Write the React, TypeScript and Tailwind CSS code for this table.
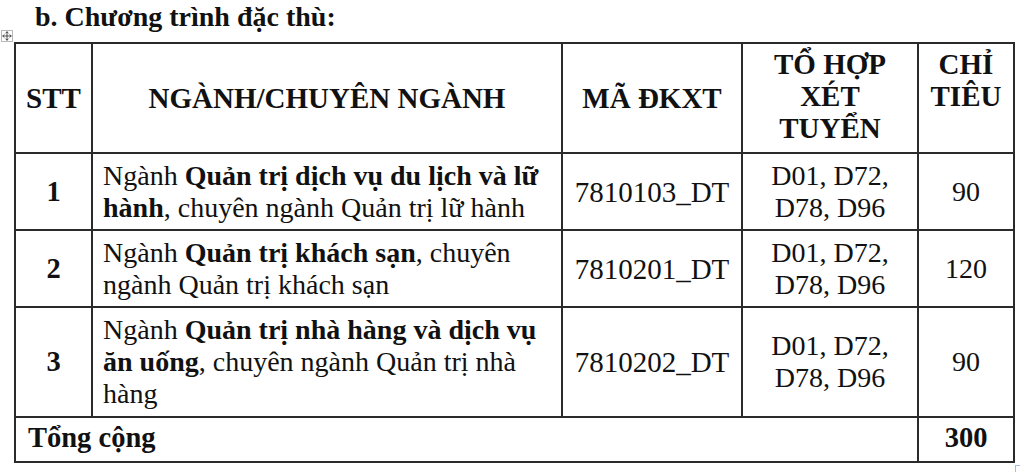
import { Move } from 'lucide-react';

const rows = [
  {
    stt: '1',
    name: (
      <>
        Ngành <b>Quản trị dịch vụ du lịch và lữ</b>
        <br />
        <b>hành</b>, chuyên ngành Quản trị lữ hành
      </>
    ),
    code: '7810103_DT',
    quota: '90',
    h: 'h-[77px]',
  },
  {
    stt: '2',
    name: (
      <>
        Ngành <b>Quản trị khách sạn</b>, chuyên
        <br />
        ngành Quản trị khách sạn
      </>
    ),
    code: '7810201_DT',
    quota: '120',
    h: 'h-[77px]',
  },
  {
    stt: '3',
    name: (
      <>
        Ngành <b>Quản trị nhà hàng và dịch vụ</b>
        <br />
        <b>ăn uống</b>, chuyên ngành Quản trị nhà
        <br />
        hàng
      </>
    ),
    code: '7810202_DT',
    quota: '90',
    h: 'h-[110px]',
  },
];

const cell = 'border-2 border-[#2a2a2a] p-0';

export default function App() {
  return (
    <div
      className="w-[1020px] h-[472px] bg-white text-[#111] overflow-hidden"
      style={{ fontFamily: '"Liberation Serif", "Times New Roman", serif' }}
    >
      <div className="pl-[35px] text-[28px] leading-[34px] font-bold">b. Chương trình đặc thù:</div>

      <div className="relative ml-[14px] mt-[8px] w-[999px]">
        {/* table move handle */}
        <span className="absolute left-[-13px] top-[-12px] flex h-[12px] w-[12px] items-center justify-center border border-[#b8b8b8] bg-white">
          <Move size={10} strokeWidth={2} className="text-[#333]" />
        </span>

        <table className="w-[999px] table-fixed border-collapse text-[28px] leading-[32px]">
          <colgroup>
            <col className="w-[77px]" />
            <col className="w-[470px]" />
            <col className="w-[180px]" />
            <col className="w-[176px]" />
            <col className="w-[96px]" />
          </colgroup>
          <thead>
            <tr className="h-[110px] font-bold text-[29px]">
              <th className={`${cell} text-center align-middle`}>STT</th>
              <th className={`${cell} text-center align-middle`}>NGÀNH/CHUYÊN NGÀNH</th>
              <th className={`${cell} text-center align-middle`}>MÃ ĐKXT</th>
              <th className={`${cell} text-center align-top pt-[4px]`}>
                TỔ HỢP
                <br />
                XÉT
                <br />
                TUYỂN
              </th>
              <th className={`${cell} text-center align-top pt-[4px]`}>
                CHỈ
                <br />
                TIÊU
              </th>
            </tr>
          </thead>
          <tbody>
            {rows.map((r) => (
              <tr key={r.stt} className={r.h}>
                <td className={`${cell} text-center align-middle font-bold text-[28.5px]`}>{r.stt}</td>
                <td className={`${cell} px-[10px] align-middle whitespace-nowrap`}>{r.name}</td>
                <td className={`${cell} text-center align-middle text-[29px]`}>{r.code}</td>
                <td className={`${cell} text-center align-middle`}>
                  D01, D72,
                  <br />
                  D78, D96
                </td>
                <td className={`${cell} text-center align-middle`}>{r.quota}</td>
              </tr>
            ))}
            <tr className="h-[45px] font-bold text-[28.5px]">
              <td colSpan={4} className={`${cell} pl-[12px] align-middle pb-[4px]`}>
                Tổng cộng
              </td>
              <td className={`${cell} text-center align-middle pb-[4px]`}>300</td>
            </tr>
          </tbody>
        </table>

        {/* table resize handle */}
        <span className="absolute right-[-8px] bottom-[-10px] h-[8px] w-[6px] border border-[#9cc0ee]" />
      </div>
    </div>
  );
}
